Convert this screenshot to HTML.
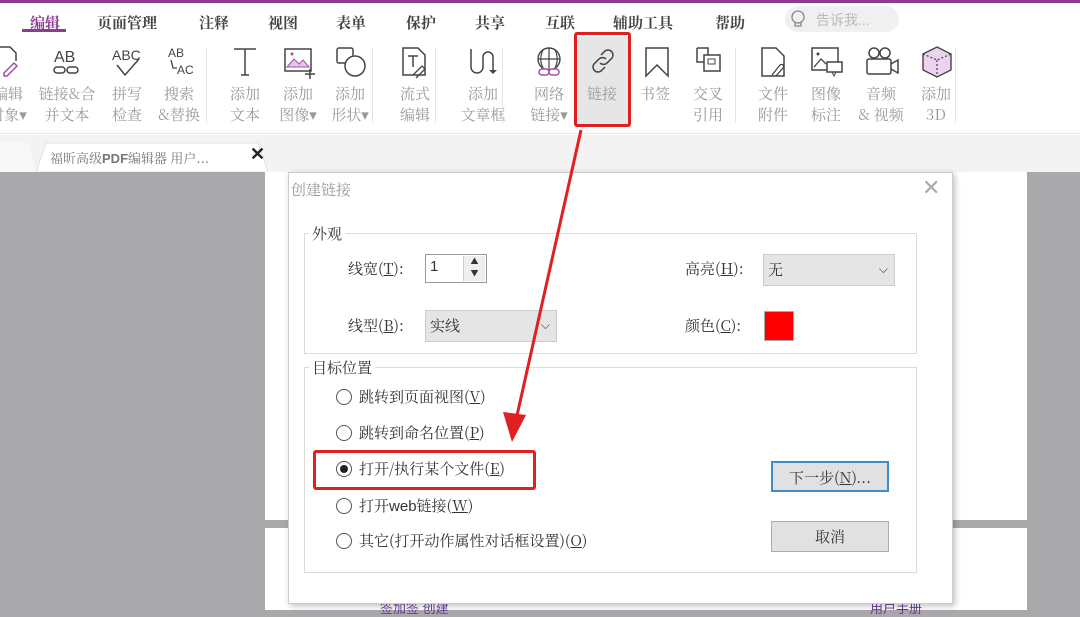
<!DOCTYPE html>
<html><head><meta charset="utf-8">
<style>
*{margin:0;padding:0;box-sizing:border-box}
body{width:1080px;height:610px;overflow:hidden;position:relative;background:#a9a8ab;font-family:"Liberation Sans","Noto Sans CJK SC",sans-serif;color:#333}
.abs{position:absolute}
#top{left:0;top:0;width:1080px;height:135px;background:#fff;border-top:3px solid #8a3d8f}
.menu{top:9px;font-size:15px;font-weight:bold;color:#444;font-family:"Noto Serif CJK SC","Liberation Serif",serif}
.lbl{font-size:15px;color:#999;text-align:center;width:60px;line-height:21px;font-family:"Noto Serif CJK SC","Liberation Serif",serif}
.sep{top:45px;width:1px;height:75px;background:#e4e4e4}
svg.ic{position:absolute;top:42px}
#tabbar{left:0;top:135px;width:1080px;height:37px;background:#f3f3f3}
.dlg{font-size:15px;color:#333;font-family:"Noto Serif CJK SC","Liberation Serif",serif}
.grp{border:1px solid #dcdcdc}
.radio{width:16px;height:16px;border:1px solid #555;border-radius:50%;background:#fff}
.btn{background:#e1e1e1;border:1px solid #adadad;text-align:center;line-height:29px}
</style></head><body>
<div id="top" class="abs">
 <div class="abs menu" style="left:30px;color:#8a3d8f">编辑</div>
 <div class="abs" style="left:22px;top:26px;width:44px;height:3px;background:#8a3d8f"></div>
 <div class="abs menu" style="left:97px">页面管理</div>
 <div class="abs menu" style="left:199px">注释</div>
 <div class="abs menu" style="left:268px">视图</div>
 <div class="abs menu" style="left:336px">表单</div>
 <div class="abs menu" style="left:406px">保护</div>
 <div class="abs menu" style="left:475px">共享</div>
 <div class="abs menu" style="left:545px">互联</div>
 <div class="abs menu" style="left:613px">辅助工具</div>
 <div class="abs menu" style="left:715px">帮助</div>
 <div class="abs" style="left:785px;top:3px;width:114px;height:26px;border-radius:13px;background:#f0f0f0"></div>
 <svg class="abs" style="left:789px;top:6px" width="18" height="22"><circle cx="9" cy="8" r="6" fill="none" stroke="#888" stroke-width="1.3"/><path d="M6 14v3h6v-3" fill="none" stroke="#888" stroke-width="1.3"/></svg>
 <div class="abs" style="left:816px;top:7px;font-size:14px;color:#bbb">告诉我...</div>

 <!-- icons -->
 <svg class="ic" style="left:-6px" width="30" height="34"><path d="M2 2h14l6 6v8" fill="none" stroke="#444" stroke-width="1.5"/><path d="M10 28l10-10 3 3-10 10h-3z" fill="none" stroke="#a34ea8" stroke-width="1.5"/></svg>
 <svg class="ic" style="left:52px" width="30" height="34"><text x="2" y="17" font-size="16" font-family="Liberation Sans" fill="#444">AB</text><rect x="2" y="22" width="11" height="6" rx="3" fill="none" stroke="#444" stroke-width="1.5"/><rect x="15" y="22" width="11" height="6" rx="3" fill="none" stroke="#444" stroke-width="1.5"/></svg>
 <svg class="ic" style="left:112px" width="30" height="34"><text x="0" y="15" font-size="14" font-family="Liberation Sans" fill="#444">ABC</text><path d="M5 20l8 10 14-16" fill="none" stroke="#444" stroke-width="1.5"/></svg>
 <svg class="ic" style="left:166px" width="30" height="34"><text x="2" y="12" font-size="12" font-family="Liberation Sans" fill="#444">AB</text><text x="11" y="29" font-size="12" font-family="Liberation Sans" fill="#444">AC</text><path d="M5 15l2 8 4 0" fill="none" stroke="#444" stroke-width="1.3"/></svg>
 <svg class="ic" style="left:231px" width="30" height="34"><path d="M3 4h22M14 4v26M10 30h8" fill="none" stroke="#444" stroke-width="1.5"/></svg>
 <svg class="ic" style="left:283px" width="34" height="34"><rect x="2" y="4" width="26" height="22" fill="none" stroke="#444" stroke-width="1.5"/><path d="M4 22l7-8 5 5 4-4 6 7z" fill="#e7c5ea" stroke="#a34ea8"/><circle cx="9" cy="9" r="1.5" fill="#a34ea8"/><path d="M27 24v10M22 29h10" stroke="#444" stroke-width="1.5"/></svg>
 <svg class="ic" style="left:335px" width="34" height="34"><rect x="2" y="3" width="16" height="15" rx="2" fill="none" stroke="#444" stroke-width="1.5"/><circle cx="20" cy="21" r="10" fill="#fff" stroke="#444" stroke-width="1.5"/></svg>
 <svg class="ic" style="left:400px" width="30" height="34"><path d="M3 3h15l7 7v20H3z" fill="none" stroke="#444" stroke-width="1.5"/><path d="M8 11h10M13 11v11" stroke="#444" stroke-width="1.5"/><path d="M13 30l9-9 3 3-9 9" fill="none" stroke="#444" stroke-width="1.3"/></svg>
 <svg class="ic" style="left:468px" width="30" height="34"><path d="M3 4v18a6 6 0 0 0 12 0V12a5 5 0 0 1 10 0v14" fill="none" stroke="#444" stroke-width="1.5"/><path d="M21 25l4 4 4-4z" fill="#444"/></svg>
 <svg class="ic" style="left:533px" width="34" height="34"><circle cx="16" cy="14" r="11" fill="none" stroke="#444" stroke-width="1.4"/><path d="M5 14h22M16 3v22M10 5c-3 6-3 12 0 18M22 5c3 6 3 12 0 18" fill="none" stroke="#444" stroke-width="1.2"/><rect x="6" y="24" width="10" height="6" rx="3" fill="#fff" stroke="#a34ea8" stroke-width="1.5"/><rect x="16" y="24" width="10" height="6" rx="3" fill="#fff" stroke="#a34ea8" stroke-width="1.5"/></svg>
 <div class="abs" style="left:576px;top:34px;width:54px;height:90px;background:#e6e6e6"></div>
 <svg class="ic" style="left:587px" width="32" height="34"><path d="M14 10l4-4a5 5 0 0 1 7 7l-5 5a5 5 0 0 1-7 0M18 22l-4 4a5 5 0 0 1-7-7l5-5a5 5 0 0 1 7 0" fill="none" stroke="#444" stroke-width="1.5"/></svg>
 <svg class="ic" style="left:643px" width="30" height="34"><path d="M3 3h22v28l-11-11-11 11z" fill="none" stroke="#444" stroke-width="1.5"/></svg>
 <svg class="ic" style="left:694px" width="30" height="34"><path d="M3 3h11v7M3 3v14h7" fill="none" stroke="#444" stroke-width="1.5"/><rect x="10" y="10" width="16" height="16" fill="none" stroke="#444" stroke-width="1.5"/><rect x="14" y="14" width="7" height="5" fill="none" stroke="#444"/></svg>
 <svg class="ic" style="left:759px" width="30" height="34"><path d="M3 3h14l8 8v20H3z" fill="none" stroke="#444" stroke-width="1.5"/><path d="M13 30l8-10a2 2 0 0 1 3 3l-7 8" fill="none" stroke="#444" stroke-width="1.3"/></svg>
 <svg class="ic" style="left:810px" width="34" height="34"><rect x="2" y="3" width="26" height="22" fill="none" stroke="#444" stroke-width="1.5"/><path d="M4 22l7-8 5 5" fill="none" stroke="#444" stroke-width="1.3"/><circle cx="8" cy="9" r="1.5" fill="#444"/><rect x="17" y="17" width="15" height="10" fill="#fff" stroke="#444" stroke-width="1.5"/><path d="M22 27l2 4 2-4" fill="none" stroke="#444"/></svg>
 <svg class="ic" style="left:864px" width="36" height="34"><circle cx="10" cy="8" r="5" fill="none" stroke="#444" stroke-width="1.5"/><circle cx="21" cy="8" r="5" fill="none" stroke="#444" stroke-width="1.5"/><rect x="3" y="14" width="24" height="15" rx="2" fill="none" stroke="#444" stroke-width="1.5"/><path d="M27 19l7-4v13l-7-4" fill="none" stroke="#444" stroke-width="1.5"/></svg>
 <svg class="ic" style="left:920px" width="34" height="34"><path d="M3 9l14-7 14 7v16l-14 7-14-7z" fill="#ecd3ee" stroke="#444" stroke-width="1.4"/><path d="M3 9l14 6 14-6M17 15v17" fill="none" stroke="#444" stroke-width="1.2" stroke-dasharray="2 2"/></svg>

 <!-- labels -->
 <div class="abs lbl" style="left:-22px;top:80px">编辑<br>对象▾</div>
 <div class="abs lbl" style="left:36px;top:80px;width:62px">链接&amp;合<br>并文本</div>
 <div class="abs lbl" style="left:97px;top:80px">拼写<br>检查</div>
 <div class="abs lbl" style="left:149px;top:80px">搜索<br>&amp;替换</div>
 <div class="abs sep" style="left:206px"></div>
 <div class="abs lbl" style="left:215px;top:80px">添加<br>文本</div>
 <div class="abs lbl" style="left:268px;top:80px">添加<br>图像▾</div>
 <div class="abs lbl" style="left:320px;top:80px">添加<br>形状▾</div>
 <div class="abs sep" style="left:372px"></div>
 <div class="abs lbl" style="left:385px;top:80px">流式<br>编辑</div>
 <div class="abs sep" style="left:435px"></div>
 <div class="abs lbl" style="left:453px;top:80px">添加<br>文章框</div>
 <div class="abs sep" style="left:502px"></div>
 <div class="abs lbl" style="left:519px;top:80px">网络<br>链接▾</div>
 <div class="abs lbl" style="left:572px;top:80px">链接</div>
 <div class="abs lbl" style="left:625px;top:80px">书签</div>
 <div class="abs lbl" style="left:678px;top:80px">交叉<br>引用</div>
 <div class="abs sep" style="left:735px"></div>
 <div class="abs lbl" style="left:743px;top:80px">文件<br>附件</div>
 <div class="abs lbl" style="left:796px;top:80px">图像<br>标注</div>
 <div class="abs lbl" style="left:851px;top:80px">音频<br>&amp; 视频</div>
 <div class="abs lbl" style="left:906px;top:80px">添加<br>3D</div>
 <div class="abs sep" style="left:955px"></div>
</div>
<div class="abs" style="left:0;top:133px;width:1080px;height:1px;background:#e8e8e8"></div>
<div id="tabbar" class="abs">
 <svg class="abs" style="left:0;top:5px" width="290" height="32"><path d="M0 3h28l8 29H0z" fill="#f8f8f8"/><path d="M36 32l10-29h212l10 29z" fill="#fff" stroke="#e0e0e0"/></svg>
 <div class="abs" style="left:50px;top:13px;font-size:13px;color:#777;font-family:'Noto Serif CJK SC',serif">福昕高级<b style="font-family:'Liberation Sans'">PDF</b>编辑器 用户...</div>
 <div class="abs" style="left:250px;top:9px;font-size:18px;font-weight:bold;color:#222">✕</div>
</div>
<!-- pages -->
<div class="abs" style="left:265px;top:172px;width:762px;height:348px;background:#fff"></div>
<div class="abs" style="left:265px;top:528px;width:762px;height:82px;background:#fff"></div>
<div class="abs" style="left:380px;top:598px;font-size:13px;color:#6a3d9a">签加签 创建</div>
<div class="abs" style="left:870px;top:598px;font-size:13px;color:#6a3d9a">用户手册</div>
<!-- dialog -->
<div class="abs dlg" style="left:288px;top:172px;width:665px;height:432px;background:#fff;border:1px solid #ccc;box-shadow:2px 2px 6px rgba(0,0,0,.25)">
 <div class="abs" style="left:2px;top:6px;color:#999">创建链接</div>
 <div class="abs" style="left:633px;top:2px;font-size:22px;color:#aaa;font-family:'Liberation Sans'">✕</div>
 <div class="abs grp" style="left:15px;top:60px;width:613px;height:121px"></div>
 <div class="abs" style="left:20px;top:50px;background:#fff;padding:0 3px">外观</div>
 <div class="abs" style="left:59px;top:85px">线宽(<u>T</u>):</div>
 <div class="abs" style="left:136px;top:81px;width:62px;height:29px;border:1px solid #999;background:#fff;padding:3px 4px;font-family:'Liberation Sans'">1</div>
 <div class="abs" style="left:174px;top:83px;width:22px;height:25px;background:#eee;border-left:1px solid #ccc;font-size:8px;text-align:center;line-height:12px">▲<br>▼</div>
 <div class="abs" style="left:396px;top:85px">高亮(<u>H</u>):</div>
 <div class="abs" style="left:474px;top:81px;width:132px;height:32px;background:#e5e5e5;border:1px solid #ccc;padding:4px">无<span style="position:absolute;right:6px;top:5px;font-size:12px">⌵</span></div>
 <div class="abs" style="left:59px;top:142px">线型(<u>B</u>):</div>
 <div class="abs" style="left:136px;top:137px;width:132px;height:32px;background:#e5e5e5;border:1px solid #ccc;padding:4px">实线<span style="position:absolute;right:6px;top:5px;font-size:12px">⌵</span></div>
 <div class="abs" style="left:396px;top:142px">颜色(<u>C</u>):</div>
 <div class="abs" style="left:475px;top:138px;width:30px;height:30px;background:#f00;border:1px solid #aaa"></div>
 <div class="abs grp" style="left:15px;top:194px;width:613px;height:206px"></div>
 <div class="abs" style="left:20px;top:184px;background:#fff;padding:0 3px">目标位置</div>
 <div class="abs radio" style="left:47px;top:216px"></div><div class="abs" style="left:70px;top:213px">跳转到页面视图(<u>V</u>)</div>
 <div class="abs radio" style="left:47px;top:252px"></div><div class="abs" style="left:70px;top:249px">跳转到命名位置(<u>P</u>)</div>
 <div class="abs radio" style="left:47px;top:288px"></div><div class="abs" style="left:51px;top:292px;width:8px;height:8px;border-radius:50%;background:#222"></div><div class="abs" style="left:70px;top:285px">打开/执行某个文件(<u>E</u>)</div>
 <div class="abs radio" style="left:47px;top:325px"></div><div class="abs" style="left:70px;top:322px">打开<span style="font-family:'Liberation Sans'">web</span>链接(<u>W</u>)</div>
 <div class="abs radio" style="left:47px;top:360px"></div><div class="abs" style="left:70px;top:357px">其它(打开动作属性对话框设置)(<u>O</u>)</div>
 <div class="abs btn" style="left:482px;top:288px;width:118px;height:31px;border:2px solid #3c8ed0">下一步(<u>N</u>)...</div>
 <div class="abs btn" style="left:482px;top:348px;width:118px;height:31px">取消</div>
</div>
<!-- red annotations -->
<div class="abs" style="left:574px;top:32px;width:57px;height:95px;border:3px solid #e02020;border-radius:3px"></div>
<div class="abs" style="left:313px;top:450px;width:223px;height:40px;border:3px solid #e02020;border-radius:3px"></div>
<svg class="abs" style="left:0;top:0" width="1080" height="610"><path d="M581 130L516 420" stroke="#e02020" stroke-width="3"/><path d="M503 412l9 30 14-27z" fill="#e02020"/></svg>
</body></html>
